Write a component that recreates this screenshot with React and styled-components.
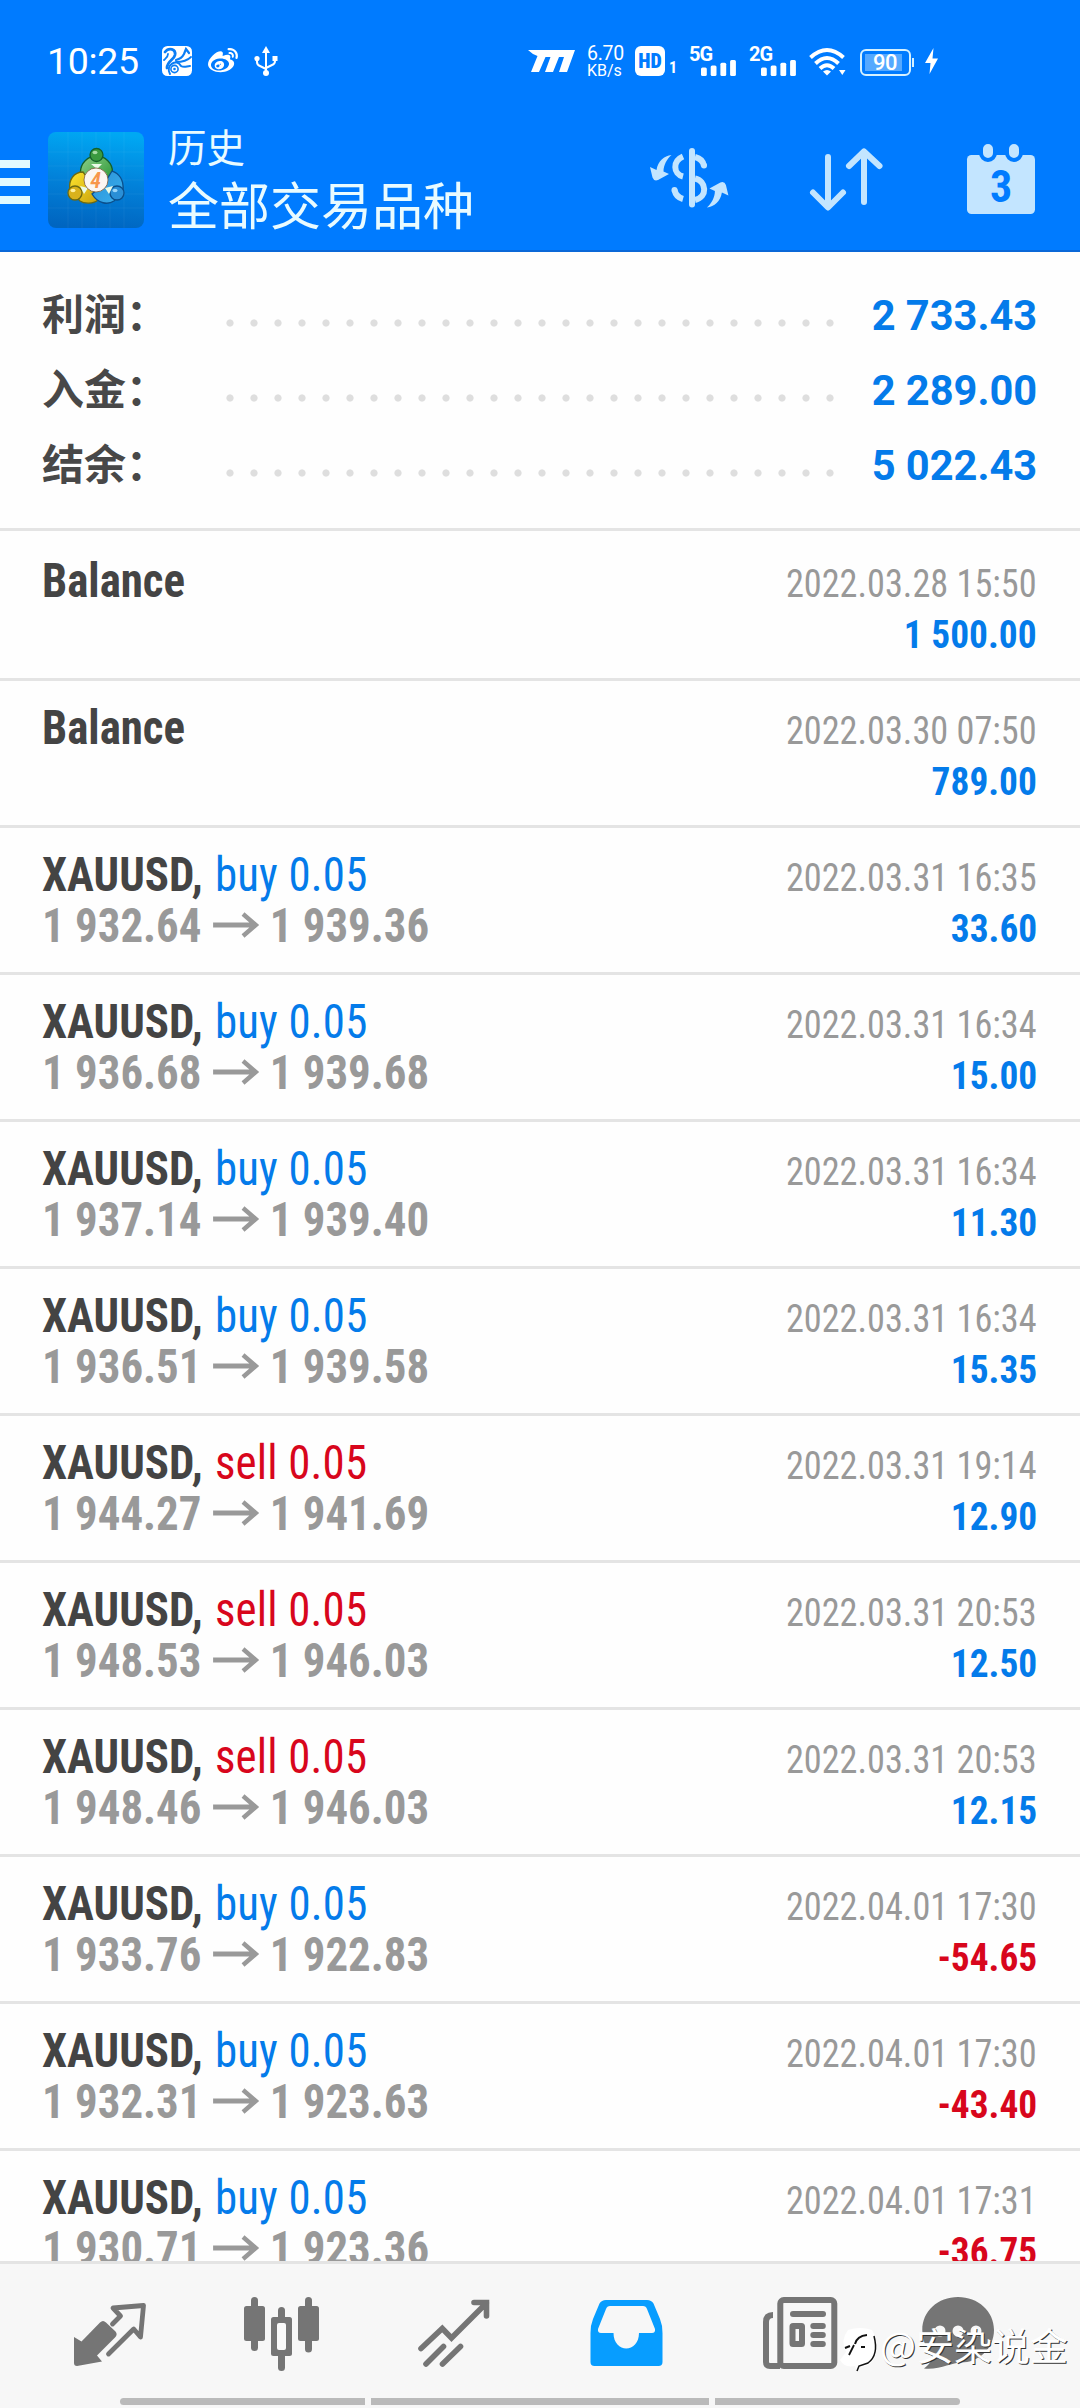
import styled, { createGlobalStyle } from 'styled-components'
import { FaWeibo } from 'react-icons/fa'

const totals = [
	{ label: '利润：', value: '2 733.43' },
	{ label: '入金：', value: '2 289.00' },
	{ label: '结余：', value: '5 022.43' },
]

const deals = [
	{ time: '2022.03.28 15:50', profit: '1 500.00' },
	{ time: '2022.03.30 07:50', profit: '789.00' },
	{ side: 'buy', open: '1 932.64', close: '1 939.36', time: '2022.03.31 16:35', profit: '33.60' },
	{ side: 'buy', open: '1 936.68', close: '1 939.68', time: '2022.03.31 16:34', profit: '15.00' },
	{ side: 'buy', open: '1 937.14', close: '1 939.40', time: '2022.03.31 16:34', profit: '11.30' },
	{ side: 'buy', open: '1 936.51', close: '1 939.58', time: '2022.03.31 16:34', profit: '15.35' },
	{ side: 'sell', open: '1 944.27', close: '1 941.69', time: '2022.03.31 19:14', profit: '12.90' },
	{ side: 'sell', open: '1 948.53', close: '1 946.03', time: '2022.03.31 20:53', profit: '12.50' },
	{ side: 'sell', open: '1 948.46', close: '1 946.03', time: '2022.03.31 20:53', profit: '12.15' },
	{ side: 'buy', open: '1 933.76', close: '1 922.83', time: '2022.04.01 17:30', profit: '-54.65' },
	{ side: 'buy', open: '1 932.31', close: '1 923.63', time: '2022.04.01 17:30', profit: '-43.40' },
	{ side: 'buy', open: '1 930.71', close: '1 923.36', time: '2022.04.01 17:31', profit: '-36.75' },
]

const App = () => {
	return (
		<Screen>
			<GlobalStyle />
			<Header>
				<StatusBar />
				<Toolbar>
					<Burger>
						<i />
						<i />
						<i />
					</Burger>
					<AppLogo />
					<Titles>
						<h2>历史</h2>
						<h1>全部交易品种</h1>
					</Titles>
					<Actions>
						<CurrencyIcon />
						<SortIcon />
						<CalendarIcon />
					</Actions>
				</Toolbar>
			</Header>
			<Summary>
				{totals.map(({ label, value }) => (
					<Total key={label}>
						<TotalLabel>{label}</TotalLabel>
						<Dots />
						<TotalValue>{value}</TotalValue>
					</Total>
				))}
			</Summary>
			<List>
				{deals.map((deal, i) => (
					<DealRow key={i} {...deal} />
				))}
			</List>
			<BottomNav />
		</Screen>
	)
}

const DealRow = ({ side, open, close, time, profit }) => (
	<Deal>
		<Line>
			{side ? (
				<Symbol>
					XAUUSD, <Side $side={side}>{side} 0.05</Side>
				</Symbol>
			) : (
				<Symbol>Balance</Symbol>
			)}
			<Time>{time}</Time>
		</Line>
		<Line>
			{side ? (
				<Prices>
					{open}
					<svg width='48' height='26' viewBox='0 0 48 26'>
						<path d='M0 12H45M32 1L45.500 12L32 23' fill='none' stroke='currentColor' strokeWidth='4.8' />
					</svg>
					{close}
				</Prices>
			) : (
				<Prices>&nbsp;</Prices>
			)}
			<Profit $loss={profit.startsWith('-')}>{profit}</Profit>
		</Line>
	</Deal>
)

const StatusBar = () => (
	<Status>
		<StatusLeft>
			<Clock>10:25</Clock>
			<svg width='30' height='30' viewBox='0 0 30 30'>
				<rect width='30' height='30' rx='5.5' fill='#fff' />
				<g fill='none' stroke='#0a7df5' strokeLinecap='round'>
					<path d='M3 6C7 1 14 3 13 9C12 14 5 15 5 22' strokeWidth='2.8' />
					<path d='M2 14C4 12 6 11 6 8' strokeWidth='1.8' />
					<path d='M14 14C18 13 20 12 22 8L24 3L27 7' strokeWidth='2.2' />
					<path d='M14 16C20 16 26 14 29 11' strokeWidth='1.8' />
					<path d='M8 28C3 19 15 12 19 20C22 22 25 20 28 20' strokeWidth='2' />
					<circle cx='12.5' cy='23' r='3.6' strokeWidth='1.6' />
				</g>
				<circle cx='12.5' cy='23' r='1.3' fill='#0a7df5' />
			</svg>
			<FaWeibo size={30} />
			<svg width='24' height='30' viewBox='0 0 24 30'>
				<path d='M12 4V27M3 13V16Q3 19 6 20L12 23M21 13V15Q21 18 18 19L12 22' fill='none' stroke='#fff' strokeWidth='2' />
				<path d='M12 0L16 7H8Z' fill='#fff' />
				<circle cx='3' cy='12.5' r='2.6' fill='#fff' />
				<rect x='18.5' y='10' width='5' height='5' fill='#fff' />
				<circle cx='12' cy='27' r='3' fill='#fff' />
			</svg>
		</StatusLeft>
		<StatusRight>
			<svg width='47' height='22' viewBox='0 0 47 22'>
				<path d='M0 0H47L39 22H31L36 7H31L25 22H17L22.500 7H17.500L11 22H3L9.500 6Q4 4 0 0Z' fill='#fff' />
			</svg>
			<Speed>
				<b>6.70</b>
				<span>KB/s</span>
			</Speed>
			<Volte>
				<b>HD</b>
				<span>1</span>
			</Volte>
			<Signal label='5G' />
			<Signal label='2G' />
			<svg width='38' height='30' viewBox='0 0 38 30'>
				<g fill='none' stroke='#fff' strokeWidth='4'>
					<path d='M1.500 11.500Q18 -3.500 34.500 11.500' />
					<path d='M6.500 17.500Q18 6.500 29.500 17.500' />
					<path d='M11 22.500Q18 16 25 22.500' />
				</g>
				<path d='M14 25.500Q18 22.500 22 25.500L18 29.500Z' fill='#fff' />
				<path d='M30 24H36.500L33.300 29Z' fill='#fff' />
			</svg>
			<Battery>
				<b>90</b>
			</Battery>
			<svg width='13' height='26' viewBox='0 0 13 26'>
				<path d='M8.500 0L0 15H5.500L4.500 26L13 10.500H7.500Z' fill='#fff' />
			</svg>
		</StatusRight>
	</Status>
)

const Signal = ({ label }) => (
	<SignalBox>
		<b>{label}</b>
		<svg width='36' height='16' viewBox='0 0 36 16'>
			<g fill='#fff'>
				<rect x='0' y='7.500' width='5.800' height='8.500' rx='1.500' />
				<rect x='9.700' y='5.500' width='5.800' height='10.500' rx='1.500' />
				<rect x='19.400' y='2.800' width='5.800' height='13.200' rx='1.500' />
				<rect x='29.100' y='0' width='5.800' height='16' rx='1.500' />
			</g>
		</svg>
	</SignalBox>
)

const AppLogo = () => (
	<svg width='96' height='96' viewBox='0 0 96 96'>
		<defs>
			<linearGradient id='sky' x1='0.5' y1='0' x2='0.4' y2='1'>
				<stop offset='0' stopColor='#00a8f3' />
				<stop offset='0.5' stopColor='#0282da' />
				<stop offset='1' stopColor='#0065c0' />
			</linearGradient>
			<linearGradient id='green' x1='0' y1='0' x2='1' y2='1'>
				<stop offset='0' stopColor='#8fd08a' />
				<stop offset='1' stopColor='#1f8f2c' />
			</linearGradient>
			<linearGradient id='gold' x1='0' y1='0' x2='1' y2='1'>
				<stop offset='0' stopColor='#ffe52e' />
				<stop offset='1' stopColor='#c9a20c' />
			</linearGradient>
			<linearGradient id='blue' x1='0' y1='0' x2='1' y2='1'>
				<stop offset='0' stopColor='#2b8fd6' />
				<stop offset='1' stopColor='#39b0ee' />
			</linearGradient>
		</defs>
		<rect width='96' height='96' rx='8' fill='url(#sky)' />
		<path d='M20 0V96M34 0V96M48 0V96M62 0V96M76 0V96M0 20H96M0 34H96M0 48H96M0 62H96M0 76H96' stroke='#fff' strokeOpacity='0.05' />
		<g strokeWidth='1.300'>
			<circle cx='48.500' cy='40' r='16' fill='url(#green)' stroke='#14602b' />
			<path d='M22 58C20 48 26 40 35 40L44 52L50 68C46 72 36 72 32 69Z' fill='url(#gold)' stroke='#6d6a12' />
			<path d='M75 58C76 48 71 41 64 39L56 52L44 62C50 72 60 73 66 69Z' fill='url(#blue)' stroke='#0b4f8c' />
			<circle cx='48.500' cy='23' r='6.500' fill='#3a9a3f' stroke='#14602b' />
			<circle cx='27' cy='61' r='7' fill='#d9b21c' stroke='#6d6a12' />
			<circle cx='69' cy='61' r='7' fill='#2a8fd6' stroke='#0b4f8c' />
		</g>
		<path d='M43 32H54L49 37ZM32 54L40 56L36 62ZM65 54L57 56L61 62Z' fill='#eafbe8' />
		<ellipse cx='47' cy='20.500' rx='2.500' ry='1.800' fill='#a6dba4' />
		<ellipse cx='25' cy='58.500' rx='2.500' ry='1.800' fill='#fff0a0' />
		<ellipse cx='67' cy='58.500' rx='2.500' ry='1.800' fill='#9bd6fa' />
		<circle cx='48' cy='48' r='12' fill='#fbf6f2' stroke='#7c5a3a' strokeWidth='0.800' />
		<text x='47.500' y='55.500' textAnchor='middle' fontFamily='Roboto Condensed' fontStyle='italic' fontWeight='600' fontSize='22' fill='#f7964a'>4</text>
	</svg>
)

const CurrencyIcon = () => (
	<svg width='84' height='72' viewBox='0 0 84 72'>
		<g fill='none' stroke='currentColor' strokeWidth='6'>
			<path d='M45 7V60.500' strokeLinecap='round' />
			<path d='M36 12.500C25.500 17 26 30 36 32.500' />
			<path d='M27.500 46Q29 53 36 55' />
			<path d='M48 13Q56 15 57 22' />
			<path d='M48 34.500C59.500 37 61 53 48 56' />
		</g>
		<circle cx='27.500' cy='46' r='3' fill='currentColor' />
		<circle cx='57' cy='21.500' r='3' fill='currentColor' />
		<path id='swap' d='M24.500 11C17 12 11 17 9.500 26L3 23L5.500 33.500Q7 37.500 11 36L22 30L16.500 27.500C16.500 21 20 15 24.500 11Z' fill='currentColor' />
		<use href='#swap' transform='rotate(180 42.2 37.2)' />
	</svg>
)

const SortIcon = () => (
	<svg width='84' height='72' viewBox='0 0 84 72'>
		<path
			d='M24 13V63M9 48.500L24 63.500L39 48.500M60 58V8M45 22L60 7.500L75.500 22'
			fill='none'
			stroke='currentColor'
			strokeWidth='6'
			strokeLinecap='round'
			strokeLinejoin='round'
		/>
	</svg>
)

const CalendarIcon = () => (
	<svg width='80' height='72' viewBox='0 0 80 72'>
		<rect x='6' y='11' width='68' height='59' rx='4.500' fill='currentColor' />
		<g fill='currentColor' stroke='#007bff' strokeWidth='4'>
			<rect x='20' y='-2' width='14' height='18' rx='7' />
			<rect x='46' y='-2' width='14' height='18' rx='7' />
		</g>
		<text x='40' y='57.500' textAnchor='middle' fontFamily='Roboto Condensed' fontWeight='700' fontSize='44' fill='#007bff'>3</text>
	</svg>
)

const BottomNav = () => (
	<Nav>
		<NavItems>
			<svg viewBox='0 0 84 84'>
				<path d='M6 46L13.500 50.500L32 31.500Q35 28.500 38 31.500L47.500 40.500Q50 43.500 47 46.500L29 64.500L34 70.500L9 75Q6 75 6 72Z' fill='currentColor' />
				<path d='M44.500 33L52.500 25L45 17L75.500 14.500L72.500 46L65.700 38L40.500 63' fill='none' stroke='currentColor' strokeWidth='4.800' strokeLinejoin='round' strokeLinecap='round' />
			</svg>
			<svg viewBox='0 0 84 84'>
				<g fill='currentColor'>
					<rect x='4' y='15' width='21' height='35' rx='2.500' />
					<rect x='11' y='6' width='7' height='54' rx='3.500' />
					<rect x='58' y='15' width='21' height='35' rx='2.500' />
					<rect x='65' y='6' width='7' height='55.500' rx='3.500' />
					<rect x='31' y='26' width='21' height='39' rx='2.500' />
					<rect x='38' y='16' width='7' height='64' rx='3.500' />
				</g>
				<rect x='37' y='32' width='9' height='27' rx='2' fill='#f9f9f9' />
			</svg>
			<svg viewBox='0 0 84 84'>
				<path
					d='M9 57.500L30.300 37.500L39.500 47L74.500 12M62 11.500H74.500V25M14 73L31.500 55.500M30.500 73L48.500 55.500'
					fill='none'
					stroke='currentColor'
					strokeWidth='5.600'
					strokeLinecap='round'
				/>
			</svg>
			<ActiveIcon viewBox='0 0 84 84'>
				<path
					fillRule='evenodd'
					fill='currentColor'
					d='M22 9H63Q67.500 9 69.500 12.500L76 28Q78.500 34 78.500 42V71Q78.500 75 74.500 75H10.500Q6.500 75 6.500 71V42Q6.500 34 9 28L15.500 12.500Q17.500 9 22 9ZM26 15Q23 15 22 18L14 38Q13.500 42 17 42H29.500C29.500 62.500 55 62.500 55 42H68Q71.500 42 71 38L63 18Q62 15 59 15Z'
				/>
			</ActiveIcon>
			<svg viewBox='0 0 84 84'>
				<g fill='none' stroke='currentColor' strokeWidth='6'>
					<path d='M17 24Q10 24 10 31V71Q10 75 14 75H24' />
					<rect x='24.300' y='9' width='54' height='66' rx='3.500' />
					<rect x='36.500' y='35' width='9.500' height='18' rx='0.500' />
				</g>
				<g fill='currentColor'>
					<rect x='34' y='20' width='36' height='6' rx='3' />
					<rect x='54.300' y='32' width='15.500' height='6' rx='3' />
					<rect x='54.300' y='41' width='15.500' height='6' rx='3' />
					<rect x='54.300' y='50' width='15.500' height='6' rx='3' />
				</g>
			</svg>
			<svg viewBox='12 0 84 84'>
				<path d='M42 6C62 6 78 20 78 39C78 58 62 71.500 45 71.500C36 71.500 24 79 8 77.500C14 73 17 68 17 63C10 58 6.300 49 6.300 39C6.300 20 22 6 42 6Z' fill='currentColor' />
				<g fill='#f7f7f7'>
					<circle cx='24' cy='40' r='5.500' />
					<circle cx='42' cy='40' r='5.500' />
					<circle cx='60' cy='40' r='5.500' />
				</g>
			</svg>
		</NavItems>
		<Gestures>
			<i />
			<i />
			<i />
		</Gestures>
		<Watermark>
			<svg width='37' height='45' viewBox='0 0 37 45'>
				<path d='M8 2Q20 -2 32 2Q37 10 36 24Q34 38 20 39L17 44L15 38Q4 40 0 32L6 24Q0 12 8 2Z' fill='#fff' />
				<path d='M34 8Q39 27 28 35L19 38L17 43' fill='none' stroke='#111' strokeWidth='1.500' />
				<path d='M5 20L10 18M15 16Q17 8 27 7' fill='none' stroke='#111' strokeWidth='2' />
				<path d='M21 19H25M14 17L9 27' fill='none' stroke='#111' strokeWidth='1.800' />
			</svg>
			<span>@安染说金</span>
		</Watermark>
	</Nav>
)

const GlobalStyle = createGlobalStyle`
	* {
		margin: 0;
		padding: 0;
		box-sizing: border-box;
	}
	body {
		background: #fefefe;
		font-family: Roboto, 'Noto Sans CJK SC', sans-serif;
	}
	svg {
		display: block;
		flex-shrink: 0;
		overflow: visible;
	}
`

const Screen = styled.div`
	display: flex;
	flex-direction: column;
	width: 1080px;
	height: 2408px;
	overflow: hidden;
	background: #fefefe;
`
const Header = styled.header`
	height: 252px;
	background: #007bff;
	border-bottom: 2px solid #0a68d8;
	color: #e9fbff;
`
const Status = styled.div`
	display: flex;
	align-items: center;
	justify-content: space-between;
	height: 112px;
	padding: 10px 142px 0 47px;
	color: #fff;
`
const StatusLeft = styled.div`
	display: flex;
	align-items: center;
	gap: 16px;
`
const Clock = styled.span`
	width: 99px;
	font-size: 37.5px;
	letter-spacing: -0.3px;
`
const StatusRight = styled.div`
	display: flex;
	align-items: center;
	gap: 12px;
`
const Speed = styled.div`
	display: flex;
	flex-direction: column;
	width: 36px;
	height: 30px;
	b {
		font-size: 19.5px;
		font-weight: 400;
		line-height: 15px;
		letter-spacing: -0.3px;
	}
	span {
		font-size: 16px;
		line-height: 19px;
	}
`
const Volte = styled.div`
	display: flex;
	align-items: flex-end;
	width: 42px;
	height: 30px;
	font-family: 'Roboto Condensed', Roboto, sans-serif;
	b {
		width: 30px;
		height: 30px;
		margin-right: 4px;
		border-radius: 6px;
		background: #fff;
		color: #007bff;
		font-size: 20px;
		font-weight: 900;
		line-height: 30px;
		text-align: center;
	}
	span {
		font-size: 16px;
		font-weight: 700;
		line-height: 16px;
	}
`
const SignalBox = styled.div`
	display: flex;
	flex-direction: column;
	width: 48px;
	height: 30px;
	b {
		height: 14px;
		font-size: 20px;
		font-weight: 700;
		line-height: 17px;
		letter-spacing: -1px;
	}
	svg {
		margin-left: 12px;
	}
`
const Battery = styled.div`
	position: relative;
	width: 51px;
	height: 27px;
	margin: 3px 2px 0 1px;
	padding: 3px;
	border: 2px solid #d5f1ff;
	border-radius: 6px;
	b {
		display: block;
		width: 37px;
		height: 17px;
		padding-left: 8px;
		background: #55a9ff;
		font-size: 22px;
		font-weight: 500;
		line-height: 18px;
		letter-spacing: -0.5px;
	}
	&::after {
		content: '';
		position: absolute;
		top: 7px;
		right: -5px;
		width: 2px;
		height: 9px;
		background: #d5f1ff;
	}
`
const Toolbar = styled.div`
	display: flex;
	align-items: center;
	height: 136px;
	padding-right: 39px;
`
const Burger = styled.div`
	display: flex;
	flex-direction: column;
	gap: 10px;
	width: 48px;
	margin-top: 4px;
	i {
		width: 30px;
		height: 8px;
		background: #e2faff;
	}
`
const Titles = styled.div`
	margin-top: -8px;
	padding-left: 24px;
	font-family: 'Noto Sans CJK SC', sans-serif;
	h2 {
		font-size: 38.5px;
		font-weight: 400;
		line-height: 54px;
	}
	h1 {
		font-size: 51px;
		font-weight: 400;
		line-height: 63px;
	}
`
const Actions = styled.div`
	display: flex;
	gap: 73px;
	margin-left: auto;
	color: #c3e5ff;
`
const Summary = styled.section`
	height: 279px;
	padding: 24px 43px 0 42px;
	border-bottom: 3px solid #e4e4e4;
`
const Total = styled.div`
	display: flex;
	align-items: center;
	height: 75px;
	line-height: 75px;
`
const TotalLabel = styled.span`
	width: 176px;
	margin-top: -5px;
	color: #484848;
	font-family: 'Noto Sans CJK SC', sans-serif;
	font-size: 42px;
	font-weight: 700;
`
const Dots = styled.span`
	width: 624px;
	height: 8px;
	margin-top: 19px;
	background: radial-gradient(circle, #dedede 3.2px, transparent 4px) 0 0 / 24px 8px repeat-x;
`
const TotalValue = styled.span`
	margin-left: auto;
	padding-top: 3px;
	color: #047bea;
	font-size: 42px;
	font-weight: 700;
	transform: scaleX(0.99);
	transform-origin: right;
`
const List = styled.section`
	flex: 1;
	min-height: 0;
	overflow: hidden;
`
const Deal = styled.div`
	height: 147px;
	padding: 21px 43px 0 42px;
	border-top: 3px solid #e4e4e4;
	font-family: 'Roboto Condensed', Roboto, sans-serif;
	&:first-child {
		border-color: transparent;
	}
`
const Line = styled.div`
	display: flex;
	align-items: baseline;
	justify-content: space-between;
	height: 51px;
	line-height: 51px;
	white-space: pre;
`
/* every text of a deal is set a little tighter than the condensed face */
const Narrow = styled.span`
	transform: scaleX(0.935);
	transform-origin: left;
`
const Symbol = styled(Narrow)`
	color: #444;
	font-size: 48px;
	font-weight: 700;
`
const Side = styled.span`
	margin-left: 2px;
	color: ${p => (p.$side === 'buy' ? '#047bea' : '#d8061c')};
	font-weight: 400;
	letter-spacing: 0.2px;
`
const Time = styled(Narrow)`
	color: #999;
	font-size: 39px;
	transform: scaleX(0.93);
	transform-origin: right;
`
const Prices = styled(Narrow)`
	display: flex;
	align-items: center;
	gap: 12.5px;
	color: #999;
	font-size: 48px;
	font-weight: 700;
`
const Profit = styled(Narrow)`
	color: ${p => (p.$loss ? '#d8061c' : '#047bea')};
	font-size: 39px;
	font-weight: 700;
	transform: scaleX(0.958);
	transform-origin: right;
`
const Nav = styled.nav`
	position: relative;
	height: 147px;
	padding-top: 27px;
	border-top: 3px solid #e4e4e4;
	background: #f7f7f7;
`
const NavItems = styled.div`
	display: flex;
	gap: 88px;
	height: 107px;
	padding-left: 68px;
	color: #757575;
	svg {
		width: 84px;
		height: 84px;
	}
`
const ActiveIcon = styled.svg`
	color: #079dff;
`
const Gestures = styled.div`
	display: grid;
	grid-template-columns: 245px 338px 245px;
	gap: 6px;
	height: 7px;
	padding-left: 120px;
	i {
		background: #bababa;
	}
	i:first-child {
		border-radius: 4px 0 0 4px;
	}
	i:last-child {
		border-radius: 0 4px 4px 0;
	}
`
const Watermark = styled.div`
	position: absolute;
	top: 64px;
	left: 840px;
	display: flex;
	gap: 3px;
	color: #fff;
	font-family: 'Noto Sans CJK SC', sans-serif;
	font-size: 38px;
	line-height: 32px;
	text-shadow: 1px 1px 0 #333;
	white-space: nowrap;
`

export default App
